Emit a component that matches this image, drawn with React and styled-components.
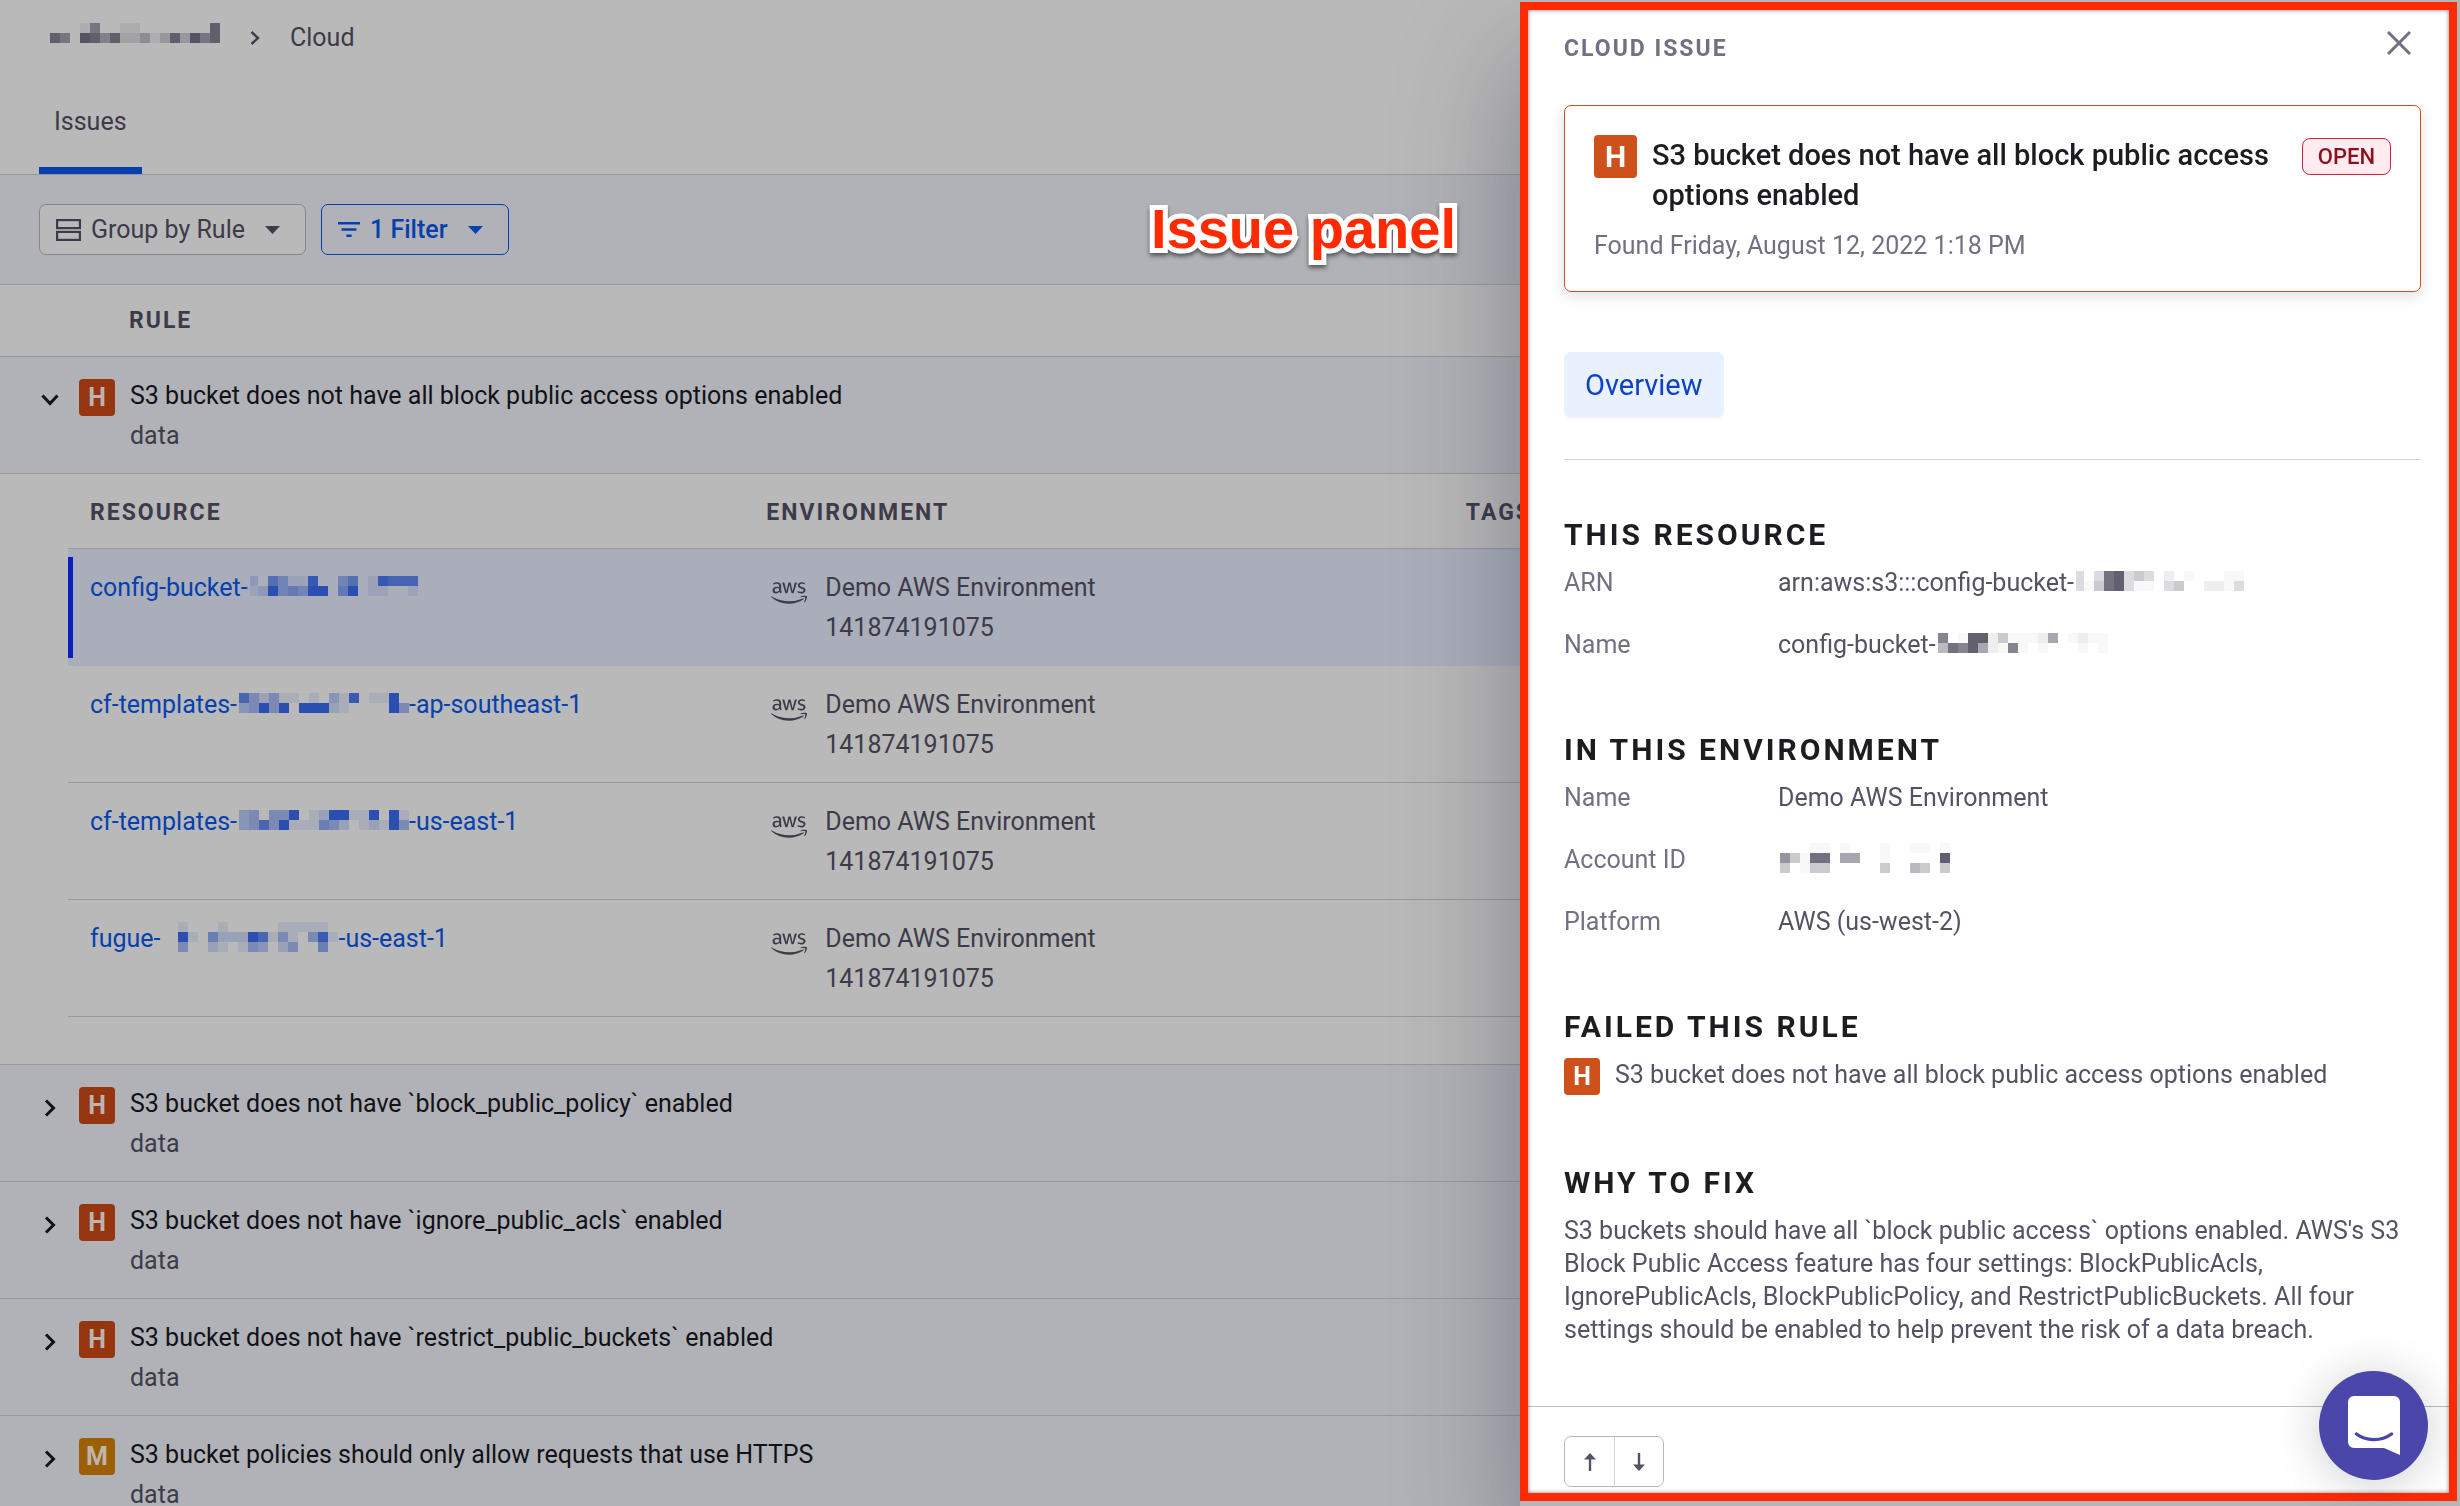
import React from "react";
import styled, { createGlobalStyle, css } from "styled-components";
import { FaAws } from "react-icons/fa";

const GlobalStyle = createGlobalStyle`
  * { box-sizing: border-box; }
  html, body { margin: 0; height: 100%; }
  body {
    overflow: hidden;
    background: #b9b9b9;
    color: #3d3b49;
    font-family: Roboto, "Liberation Sans", sans-serif;
    font-size: 25px;
    line-height: 40px;
  }
  h1, h2, h3, p, dl, dd, dt, ul, ol { margin: 0; padding: 0; }
  button { font: inherit; color: inherit; cursor: pointer; margin: 0; }
  svg { display: block; flex: none; }
`;

const line = "#97979e";

/* ---------- redacted text ---------- */

const MosaicSvg = styled.svg`
  && { display: inline-block; }
  vertical-align: ${(p) => (p.$rows > 2 ? "-5px" : "0")};
  margin-left: ${(p) => p.$lead || 0}px;
`;

function Mosaic({ rows, color, lead = 2, first = 10 }) {
  const cols = rows[0].length;
  const width = cols * 10 - (10 - first);
  return (
    <MosaicSvg
      $rows={rows.length}
      $lead={lead}
      width={width}
      height={rows.length * 10}
      viewBox={`${10 - first} 0 ${width} ${rows.length * 10}`}
      shapeRendering="crispEdges"
      aria-hidden="true"
    >
      {rows.flatMap((row, y) =>
        [...row].map((c, x) => {
          const level = c === "." ? 0.4 : Number(c);
          return level ? (
            <rect key={`${x}-${y}`} x={x * 10} y={y * 10} width="10" height="10" fill={color} fillOpacity={level / 9} />
          ) : null;
        })
      )}
    </MosaicSvg>
  );
}

/* ---------- shared ---------- */

const Badge = styled.span`
  flex: none;
  display: grid;
  place-items: center;
  width: ${(p) => (p.$large ? 43 : 36)}px;
  height: ${(p) => (p.$large ? 43 : 37)}px;
  border-radius: 4px;
  font-weight: 700;
  font-size: ${(p) => (p.$large ? 30 : 25)}px;
  line-height: 36px;
  color: ${(p) => (p.$dim ? "#bdb4b0" : "#fff")};
  background: ${(p) => (p.$dim ? (p.$medium ? "#9d5f02" : "#963610") : "#ce501a")};
`;

const capsText = css`
  font-size: 23px;
  font-weight: 700;
  letter-spacing: 2px;
  text-transform: uppercase;
`;

/* ---------- page ---------- */

const Page = styled.main`
  height: 100vh;
  overflow: hidden;
`;

const Breadcrumb = styled.nav`
  display: flex;
  align-items: center;
  padding: 18px 50px 0;
  height: 58px;
`;

const CrumbLink = styled.a`
  display: flex;
  width: 170px;
  margin-right: 30px;
  padding-bottom: 10px;
`;

const CrumbText = styled.span`
  margin-left: 30px;
`;

const Tabs = styled.div`
  display: flex;
  padding: 44px 39px 0;
  border-bottom: 1px solid ${line};
`;

const Tab = styled.button`
  border: 0;
  border-bottom: 7px solid #0640ae;
  background: none;
  padding: 0 15px 25px;
`;

const Toolbar = styled.div`
  display: flex;
  gap: 15px;
  padding: 29px 39px;
  background: #b1b2b7;
  border-bottom: 1px solid ${line};
`;

const ToolButton = styled.button`
  display: flex;
  align-items: center;
  height: 51px;
  padding: 0 25px 0 16px;
  border: 1px solid ${(p) => (p.$active ? "#0640ae" : "#85858d")};
  border-radius: 7px;
  background: ${(p) => (p.$active ? "transparent" : "#b9b9b9")};
  color: ${(p) => (p.$active ? "#0640ae" : "#3d3b49")};
  font-weight: ${(p) => (p.$active ? 500 : 400)};
  span { margin: 0 20px 0 10px; }
`;

const ListHeader = styled.div`
  ${capsText}
  display: flex;
  align-items: center;
  height: 72px;
  padding-left: 129px;
  border-bottom: 1px solid ${line};
`;

const RuleRow = styled.button`
  display: flex;
  width: 100%;
  align-items: flex-start;
  padding: 19px 40px 17px 39px;
  border: 0;
  border-bottom: 1px solid ${line};
  background: #b1b2b7;
  text-align: left;
`;

const Caret = styled.span`
  display: grid;
  place-items: center;
  width: 21px;
  height: 48px;
  margin-right: 19px;
  color: #111217;
`;

const RuleBadge = styled(Badge)`
  margin: 3px 15px 0 0;
`;

const RuleText = styled.span`
  display: flex;
  flex-direction: column;
`;

const RuleTitle = styled.span`
  color: #111217;
`;

const ResourceArea = styled.div`
  padding: 0 60px 47px 68px;
  border-bottom: 1px solid ${line};
`;

const Table = styled.table`
  width: 100%;
  table-layout: fixed;
  border-collapse: separate;
  border-spacing: 0;
`;

const Th = styled.th`
  ${capsText}
  width: ${(p) => p.$width};
  height: 75px;
  padding: 3px 22px 0;
  text-align: left;
  border-bottom: 1px solid ${line};
`;

const Td = styled.td`
  height: 117px;
  padding: 19px 22px 17px;
  vertical-align: top;
  white-space: nowrap;
  border-bottom: 1px solid ${(p) => (p.$selected ? "#aaaeba" : line)};
  ${(p) =>
    p.$selected &&
    css`
      background: #aaaeba;
      &:first-child {
        background: linear-gradient(#0a1fc0, #0a1fc0) 0 8px / 5px 101px no-repeat, #aaaeba;
      }
    `}
`;

const ResourceLink = styled.a`
  color: #0640ae;
  text-decoration: none;
`;

const Env = styled.div`
  display: flex;
  align-items: flex-start;
  svg { margin: 7px 18px 0 5px; }
`;

/* ---------- callout ---------- */

const Callout = styled.div`
  position: absolute;
  top: 197px;
  right: 1004px;
  font: 700 56px/64px "Liberation Sans", Arial, sans-serif;
  color: #ff2a00;
  paint-order: stroke fill;
  -webkit-text-stroke: 10px #fff;
  filter: drop-shadow(0 3px 2px rgba(0, 0, 0, 0.5));
`;

/* ---------- issue panel ---------- */

const Panel = styled.aside`
  position: fixed;
  top: 0;
  right: 0;
  bottom: 0;
  width: 940px;
  max-width: 100%;
  display: flex;
  flex-direction: column;
  background: #fff;
  color: #555363;
  border: solid #b5b5b7;
  border-width: 2px 3px 5px 0;
  box-shadow: 0 60px 110px rgba(40, 42, 60, 0.38);
`;

const Frame = styled.div`
  position: absolute;
  inset: 0;
  border: 8px solid #ff2a00;
  box-shadow: inset 0 0 4px rgba(0, 0, 0, 0.5);
  pointer-events: none;
`;

const PanelHeader = styled.header`
  display: flex;
  justify-content: space-between;
  align-items: flex-start;
  height: 103px;
  padding: 22px 39px 0 44px;
`;

const PanelLabel = styled.h1`
  ${capsText}
  line-height: 50px;
  color: #727184;
`;

const CloseButton = styled.button`
  display: grid;
  place-items: center;
  width: 38px;
  height: 38px;
  padding: 0;
  border: 0;
  background: none;
  color: #727184;
`;

const PanelBody = styled.div`
  flex: 1;
  min-height: 0;
  overflow: hidden;
  padding: 0 36px 0 44px;
`;

const Card = styled.section`
  padding: 29px 29px 25px;
  border: 1px solid #ce501a;
  border-radius: 7px;
  box-shadow: 0 4px 14px rgba(60, 60, 80, 0.16);
`;

const CardTop = styled.div`
  display: flex;
  align-items: flex-start;
`;

const CardTitle = styled.h2`
  flex: 1;
  margin: 0 15px;
  font-size: 29px;
  font-weight: 500;
  color: #1c1c21;
`;

const Status = styled.span`
  margin-top: 3px;
  padding: 0 15px;
  border: 1px solid #d6213e;
  border-radius: 8px;
  background: #ffebf0;
  color: #8f0f1c;
  font-size: 22px;
  font-weight: 500;
  line-height: 35px;
`;

const Found = styled.p`
  margin-top: 11px;
  color: #727184;
`;

const OverviewTab = styled.button`
  display: block;
  height: 66px;
  margin: 60px 0 41px;
  padding: 0 21px;
  border: 0;
  border-radius: 7px;
  background: #e9f1fe;
  color: #0d42c4;
  font-size: 29px;
`;

const Sections = styled.div`
  display: flex;
  flex-direction: column;
  gap: 65px;
  padding-top: 55px;
  border-top: 1px solid #d3d3d8;
`;

const SectionTitle = styled.h3`
  margin-bottom: 8px;
  font-size: 30px;
  font-weight: 700;
  letter-spacing: 3px;
  text-transform: uppercase;
  color: #1c1c21;
`;

const Facts = styled.dl`
  display: grid;
  grid-template-columns: 214px 1fr;
  row-gap: 22px;
  dt { color: #727184; }
`;

const FailedRule = styled.p`
  display: flex;
  padding-bottom: 3px;
`;

const Reason = styled.p`
  padding-top: 3px;
  line-height: 33px;
`;

const PanelFooter = styled.footer`
  height: 95px;
  padding: 29px 44px 0;
  border-top: 1px solid #bdbcc9;
`;

const Pager = styled.div`
  display: inline-flex;
  border: 1px solid #b9b8c4;
  border-radius: 7px;
`;

const PagerButton = styled.button`
  display: grid;
  place-items: center;
  width: 49px;
  height: 49px;
  padding: 0;
  border: 0;
  background: none;
  & + & { border-left: 1px solid #d3d3d8; }
`;

const ChatButton = styled.button`
  position: absolute;
  right: 29px;
  bottom: 21px;
  display: grid;
  place-items: center;
  width: 109px;
  height: 109px;
  padding: 0;
  border: 0;
  border-radius: 50%;
  background: #4b46aa;
  box-shadow: 0 4px 48px rgba(0, 0, 0, 0.2);
`;

/* ---------- icons ---------- */

const Chevron = ({ down, thin }) => (
  <svg
    width={down ? 18 : thin ? 10 : 12}
    height={down ? 12 : thin ? 14 : 18}
    viewBox={down ? "0 0 18 12" : thin ? "0 0 10 14" : "0 0 12 18"}
    fill="none"
    stroke="currentColor"
    strokeWidth={thin ? 2.4 : 3}
  >
    <path d={down ? "M1.5 1.5 9 9.5l7.5-8" : thin ? "M1.5 1 8 7l-6.5 6" : "M2 1.5 9.5 9 2 16.5"} />
  </svg>
);

const Triangle = () => (
  <svg width="15" height="8" viewBox="0 0 15 8" fill="currentColor">
    <path d="M0 0h15L7.5 8z" />
  </svg>
);

const RowsIcon = () => (
  <svg width="25" height="22" viewBox="0 0 25 22" fill="none" stroke="currentColor" strokeWidth="2.2">
    <rect x="1.1" y="1.1" width="22.8" height="8" />
    <rect x="1.1" y="12.9" width="22.8" height="8" />
  </svg>
);

const FilterIcon = () => (
  <svg width="22" height="15" viewBox="0 0 22 15" fill="currentColor">
    <path d="M0 0h22v2.6H0zM3.6 6.2h14.8v2.6H3.6zM8.4 12.4h5.2V15H8.4z" />
  </svg>
);

const Arrow = ({ down }) => (
  <svg width="12" height="18" viewBox="0 0 12 18" fill="currentColor">
    <path d={down ? "M6 18 0 11.4h4.8V0h2.4v11.4H12z" : "M6 0 12 6.6H7.2V18H4.8V6.6H0z"} />
  </svg>
);

/* ---------- data ---------- */

const linkInk = "#2a4fb0";

const resources = [
  {
    start: "config-bucket-",
    first: 8,
    rows: ["20641180046018777", "12945499059011001"],
    selected: true,
  },
  {
    start: "cf-templates-",
    rows: ["74241101031801190", "34949099921000094"],
    end: "-ap-southeast-1",
  },
  {
    start: "cf-templates-",
    rows: ["34044901299119091", "34749111542012194"],
    end: "-us-east-1",
  },
  {
    start: "fugue-",
    lead: 18,
    rows: ["1000100000111110", "9105222971410481", "4002101430240050"],
    end: "-us-east-1",
  },
];

const rules = [
  { level: "H", title: "S3 bucket does not have `block_public_policy` enabled" },
  { level: "H", title: "S3 bucket does not have `ignore_public_acls` enabled" },
  { level: "H", title: "S3 bucket does not have `restrict_public_buckets` enabled" },
  { level: "M", title: "S3 bucket policies should only allow requests that use HTTPS" },
];

function Rule({ level, title, open }) {
  return (
    <RuleRow aria-expanded={!!open}>
      <Caret>
        <Chevron down={open} />
      </Caret>
      <RuleBadge $dim $medium={level === "M"}>{level}</RuleBadge>
      <RuleText>
        <RuleTitle>{title}</RuleTitle>
        <span>data</span>
      </RuleText>
    </RuleRow>
  );
}

export default function App() {
  return (
    <>
      <GlobalStyle />
      <Page>
        <Breadcrumb aria-label="Breadcrumb">
          <CrumbLink href="#" aria-label="Organization">
            <Mosaic color="#565463" lead={0} rows={["00016001100000008", "86098582241383968"]} />
          </CrumbLink>
          <Chevron thin />
          <CrumbText>Cloud</CrumbText>
        </Breadcrumb>
        <Tabs>
          <Tab>Issues</Tab>
        </Tabs>
        <Toolbar>
          <ToolButton>
            <RowsIcon />
            <span>Group by Rule</span>
            <Triangle />
          </ToolButton>
          <ToolButton $active>
            <FilterIcon />
            <span>1 Filter</span>
            <Triangle />
          </ToolButton>
        </Toolbar>
        <ListHeader>Rule</ListHeader>
        <Rule open level="H" title="S3 bucket does not have all block public access options enabled" />
        <ResourceArea>
          <Table>
            <thead>
              <tr>
                <Th $width="29%">Resource</Th>
                <Th $width="30%">Environment</Th>
                <Th $width="41%">Tags</Th>
              </tr>
            </thead>
            <tbody>
              {resources.map((r, i) => (
                <tr key={i}>
                  <Td $selected={r.selected}>
                    <ResourceLink href="#">
                      {r.start}
                      <Mosaic rows={r.rows} first={r.first} lead={r.lead} color={linkInk} />
                      {r.end}
                    </ResourceLink>
                  </Td>
                  <Td $selected={r.selected}>
                    <Env>
                      <FaAws size={36} />
                      <div>
                        <div>Demo AWS Environment</div>
                        <div>141874191075</div>
                      </div>
                    </Env>
                  </Td>
                  <Td $selected={r.selected} />
                </tr>
              ))}
            </tbody>
          </Table>
        </ResourceArea>
        {rules.map((r) => (
          <Rule key={r.title} {...r} />
        ))}
      </Page>

      <Panel>
        <PanelHeader>
          <PanelLabel>Cloud issue</PanelLabel>
          <CloseButton aria-label="Close">
            <svg width="24" height="24" viewBox="0 0 24 24" stroke="currentColor" strokeWidth="3">
              <path d="M1 1l22 22M23 1 1 23" />
            </svg>
          </CloseButton>
        </PanelHeader>
        <PanelBody>
          <Card>
            <CardTop>
              <Badge $large>H</Badge>
              <CardTitle>S3 bucket does not have all block public access options enabled</CardTitle>
              <Status>OPEN</Status>
            </CardTop>
            <Found>Found Friday, August 12, 2022 1:18 PM</Found>
          </Card>
          <OverviewTab>Overview</OverviewTab>
          <Sections>
            <section>
              <SectionTitle>This resource</SectionTitle>
              <Facts>
                <dt>ARN</dt>
                <dd>
                  arn:aws:s3:::config-bucket-
                  <Mosaic color="#62606f" first={8} rows={["20289232010.000..", "2.3892..0230011.2"]} />
                </dd>
                <dt>Name</dt>
                <dd>
                  config-bucket-
                  <Mosaic color="#62606f" rows={["70.9913...150.1..", "487951.7.0.000.0."]} />
                </dd>
              </Facts>
            </section>
            <section>
              <SectionTitle>In this environment</SectionTitle>
              <Facts>
                <dt>Name</dt>
                <dd>Demo AWS Environment</dd>
                <dt>Account ID</dt>
                <dd>
                  <Mosaic color="#62606f" rows={["000..0.000.00..0.", "63.8805500.000009", "30.33000003004303"]} />
                </dd>
                <dt>Platform</dt>
                <dd>AWS (us-west-2)</dd>
              </Facts>
            </section>
            <section>
              <SectionTitle>Failed this rule</SectionTitle>
              <FailedRule>
                <RuleBadge>H</RuleBadge>
                <span>S3 bucket does not have all block public access options enabled</span>
              </FailedRule>
            </section>
            <section>
              <SectionTitle>Why to fix</SectionTitle>
              <Reason>
                S3 buckets should have all `block public access` options enabled. AWS's S3 Block Public Access feature
                has four settings: BlockPublicAcls, IgnorePublicAcls, BlockPublicPolicy, and RestrictPublicBuckets. All
                four settings should be enabled to help prevent the risk of a data breach.
              </Reason>
            </section>
          </Sections>
        </PanelBody>
        <PanelFooter>
          <Pager>
            <PagerButton aria-label="Previous issue">
              <Arrow />
            </PagerButton>
            <PagerButton aria-label="Next issue">
              <Arrow down />
            </PagerButton>
          </Pager>
        </PanelFooter>
        <Frame />
        <ChatButton aria-label="Open chat">
          <svg width="52" height="59" viewBox="0 0 52 59">
            <path d="M6 0h40a6 6 0 0 1 6 6v53L36 52H6a6 6 0 0 1-6-6V6a6 6 0 0 1 6-6z" fill="#fff" />
            <path d="M8.5 38c10 7.500 25 7.500 35 0" fill="none" stroke="#4b46aa" strokeWidth="3.4" strokeLinecap="round" />
          </svg>
        </ChatButton>
      </Panel>
      <Callout>Issue panel</Callout>
    </>
  );
}
